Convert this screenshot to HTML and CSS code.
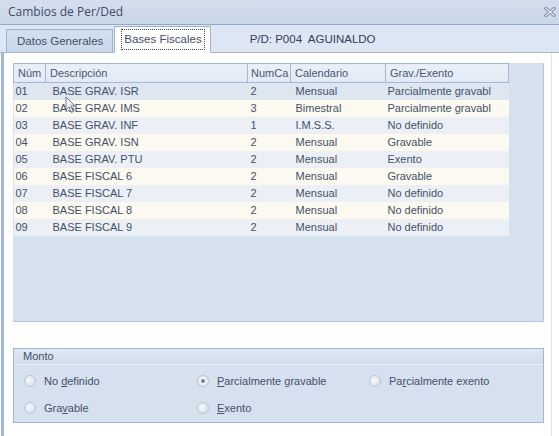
FILE: index.html
```html
<!DOCTYPE html>
<html lang="es">
<head>
<meta charset="utf-8">
<title>Cambios de Per/Ded</title>
<link rel="stylesheet" href="styles.css">
</head>
<body>
<div class="window">
  <div class="titlebar">
    <span class="title">Cambios de Per/Ded</span>
    <svg class="close" width="12" height="10" viewBox="0 0 12 10">
      <path d="M2 1.5 L10 8.5 M10 1.5 L2 8.5" stroke="#8795aa" stroke-width="3.2" stroke-linecap="square" fill="none"/>
      <path d="M2 1.5 L10 8.5 M10 1.5 L2 8.5" stroke="#e4eaf2" stroke-width="1.2" stroke-linecap="square" fill="none"/>
    </svg>
  </div>
  <div class="tabrow">
    <div class="tab">Datos Generales</div>
    <div class="tab active"><span class="focus">Bases Fiscales</span></div>
    <div class="pd">P/D: P004&nbsp; AGUINALDO</div>
  </div>
  <div class="panel">
    <div class="grid">
      <table>
        <thead>
          <tr><th>Núm</th><th>Descripción</th><th>NumCa</th><th>Calendario</th><th>Grav./Exento</th></tr>
        </thead>
        <tbody>
          <tr class="hot"><td>01</td><td>BASE GRAV. ISR</td><td>2</td><td>Mensual</td><td>Parcialmente gravabl</td></tr>
          <tr><td>02</td><td>BASE GRAV. IMS</td><td>3</td><td>Bimestral</td><td>Parcialmente gravabl</td></tr>
          <tr><td>03</td><td>BASE GRAV. INF</td><td>1</td><td>I.M.S.S.</td><td>No definido</td></tr>
          <tr><td>04</td><td>BASE GRAV. ISN</td><td>2</td><td>Mensual</td><td>Gravable</td></tr>
          <tr><td>05</td><td>BASE GRAV. PTU</td><td>2</td><td>Mensual</td><td>Exento</td></tr>
          <tr><td>06</td><td>BASE FISCAL 6</td><td>2</td><td>Mensual</td><td>Gravable</td></tr>
          <tr><td>07</td><td>BASE FISCAL 7</td><td>2</td><td>Mensual</td><td>No definido</td></tr>
          <tr><td>08</td><td>BASE FISCAL 8</td><td>2</td><td>Mensual</td><td>No definido</td></tr>
          <tr><td>09</td><td>BASE FISCAL 9</td><td>2</td><td>Mensual</td><td>No definido</td></tr>
        </tbody>
      </table>
      <svg class="cursor" width="12" height="18" viewBox="0 0 12 18">
        <path d="M1 1 L1 14 L4 11 L6.5 16.5 L8.5 15.5 L6 10 L10 10 Z" fill="#f4f6fa" stroke="#5a6478" stroke-width="1" stroke-linejoin="round"/>
      </svg>
    </div>
    <div class="group">
      <div class="group-head">Monto</div>
      <div class="radios">
        <label class="opt"><span class="radio"></span><span>No <u>d</u>efinido</span></label>
        <label class="opt"><span class="radio checked"></span><span><u>P</u>arcialmente gravable</span></label>
        <label class="opt"><span class="radio"></span><span>Pa<u>r</u>cialmente exento</span></label>
        <label class="opt"><span class="radio"></span><span>Gra<u>v</u>able</span></label>
        <label class="opt"><span class="radio"></span><span><u>E</u>xento</span></label>
      </div>
    </div>
  </div>
</div>
</body>
</html>
```
FILE: styles.css
```css
* { box-sizing: border-box; }
html, body { margin: 0; padding: 0; background: #ffffff; }
body {
  font-family: "Liberation Sans", Arial, sans-serif;
  font-size: 11px;
  color: #435068;
}
.window {
  width: 559px;
  height: 436px;
  display: flex;
  flex-direction: column;
  background: #ffffff;
  overflow: hidden;
}
.titlebar {
  height: 25px;
  flex: none;
  display: flex;
  align-items: center;
  justify-content: space-between;
  padding: 0 3px 1px 8px;
  background: linear-gradient(#d3deed, #cad7e9);
  border-bottom: 1px solid #95a9c5;
}
.title {
  font-family: "Open Sans", "Noto Sans", sans-serif;
  font-size: 12px;
  color: #3e4c63;
}
.close { display: block; margin-top: 1px; }

.tabrow {
  height: 28px;
  flex: none;
  display: flex;
  align-items: flex-end;
  padding-left: 6px;
  background: #dde7f3;
  border-bottom: 1px solid #a8bad3;
}
.tab {
  height: 24px;
  margin-bottom: -1px;
  padding: 0 9px 0 10px;
  display: flex;
  align-items: center;
  font-size: 11.5px;
  color: #435068;
  background: linear-gradient(#d4e0ef, #c9d7ea);
  border: 1px solid #9fb3cf;
  border-bottom-color: #a8bad3;
}
.tab.active {
  height: 27px;
  margin-left: 1px;
  padding: 0 5px 0 6px;
  background: #ffffff;
  border-bottom-color: #ffffff;
}
.focus {
  border: 1px dotted #4a4a4a;
  padding: 3px 2px 4px 2px;
}
.pd {
  align-self: center;
  margin-left: 39px;
  margin-top: 1px;
  font-size: 11.5px;
  color: #33405a;
}

.panel {
  flex: 1;
  display: flex;
  flex-direction: column;
  margin-left: 1px;
  width: 551px;
  border-left: 3px solid #a2b8d8;
  border-right: 1px solid #dfe4ec;
  padding: 10px 7px 0 9px;
  gap: 26px;
}
.grid {
  position: relative;
  height: 259px;
  flex: none;
  background: #d6e1f0;
  border: 1px solid #b6c6dc;
  border-left: 0;
  border-top: 0;
}
table {
  border-collapse: collapse;
  table-layout: fixed;
  width: 495px;
}
th, td {
  white-space: nowrap;
  overflow: hidden;
  text-align: left;
  font-weight: normal;
  padding: 0 0 0 4px;
}
th {
  height: 19px;
  background: linear-gradient(#eaf0f8, #e1e9f5);
  border: 1px solid #a3b9d6;
  color: #4a576e;
}
td { height: 17px; color: #435068; }
th:nth-child(1) { width: 32px; }
th:nth-child(2) { width: 202px; }
th:nth-child(3) { width: 43px; padding-left: 3px; }
th:nth-child(4) { width: 95px; }
th:nth-child(5) { width: 123px; }
td:nth-child(1) { padding-left: 2px; }
td:nth-child(2) { padding-left: 7px; }
td:nth-child(3) { padding-left: 3px; }
td:nth-child(4) { padding-left: 5px; }
td:nth-child(5) { padding-left: 2px; }
tbody tr:nth-child(odd) { background: #ecf0f6; }
tbody tr:nth-child(even) { background: #fcfaf0; }
tbody tr.hot { background: #dee6f0; }
.cursor {
  position: absolute;
  left: 52px;
  top: 33px;
  opacity: 0.85;
}

.group {
  height: 75px;
  flex: none;
  background: #d6e1f0;
  border: 1px solid #9fb6d6;
}
.group-head {
  height: 16px;
  padding-left: 9px;
  line-height: 15px;
  font-size: 11px;
  color: #435068;
  background: linear-gradient(#dde7f3, #d3deed);
  border-bottom: 1px solid #eaf0f8;
}
.radios {
  display: grid;
  grid-template-columns: 173px 172px auto;
  grid-auto-rows: 27px;
  padding: 2px 0 0 10px;
}
.opt {
  display: flex;
  align-items: center;
  gap: 8px;
  font-size: 11px;
  color: #435068;
}
.opt:nth-child(4) { grid-column: 1; }
.radio {
  width: 12px;
  height: 12px;
  border-radius: 50%;
  flex: none;
  border: 1px solid #b9c4d3;
  background: radial-gradient(circle at 40% 40%, #f7f8fa 0, #e4e8ee 55%, #cfd6df 100%);
}
.radio.checked {
  background: radial-gradient(circle, #6f819c 0, #7d8ea8 1.6px, #f6f8fb 2.4px, #eef1f5 3.5px, #cdd5e0 100%);
}
u { text-decoration: underline; text-underline-offset: 1px; }
```
